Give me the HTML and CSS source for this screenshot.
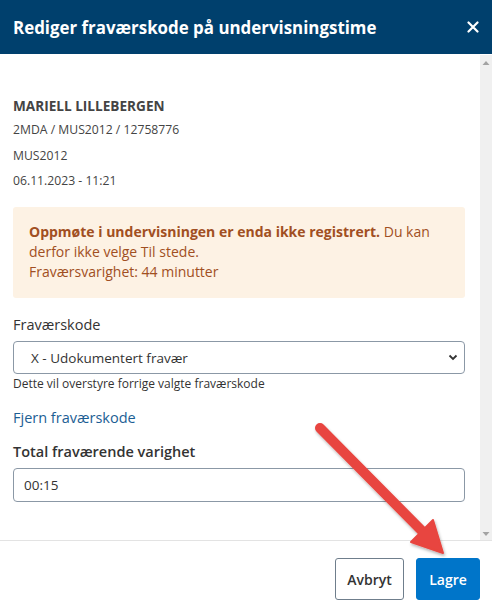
FILE: index.html
```html
<!DOCTYPE html>
<html lang="no">
<head>
<meta charset="utf-8">
<title>Rediger fraværskode</title>
<link rel="stylesheet" href="styles.css">
</head>
<body>
<div class="modal">
  <header class="modal-header">
    <h1 class="modal-title">Rediger fraværskode på undervisningstime</h1>
    <button class="close-btn" aria-label="Lukk">
      <svg width="12" height="12" viewBox="0 0 12 12"><path d="M1.5 1.5 L10.5 10.5 M10.5 1.5 L1.5 10.5" stroke="#fff" stroke-width="2.2" stroke-linecap="round"/></svg>
    </button>
  </header>
  <div class="modal-main">
    <div class="modal-body">
      <div class="student">
        <div class="student-name">MARIELL LILLEBERGEN</div>
        <div class="student-meta m1">2MDA / MUS2012 / 12758776</div>
        <div class="student-meta m2">MUS2012</div>
        <div class="student-meta m3">06.11.2023 - 11:21</div>
      </div>
      <div class="alert">
        <strong>Oppmøte i undervisningen er enda ikke registrert.</strong> Du kan derfor ikke velge Til stede.<br>
        Fraværsvarighet: 44 minutter
      </div>
      <label class="field-label">Fraværskode</label>
      <div class="select">
        <span>X - Udokumentert fravær</span>
        <svg width="10" height="7" viewBox="0 0 10 7"><path d="M1.5 1.5 L5 5 L8.5 1.5" stroke="#333" stroke-width="1.8" fill="none"/></svg>
      </div>
      <div class="help">Dette vil overstyre forrige valgte fraværskode</div>
      <a class="link" href="#">Fjern fraværskode</a>
      <label class="field-label strong">Total fraværende varighet</label>
      <div class="input">00:15</div>
    </div>
    <div class="scrollbar">
      <svg width="12" height="12" viewBox="0 0 12 12"><path d="M2.5 8 L6 4 L9.5 8 Z" fill="#a3a3a3"/></svg>
      <svg width="12" height="12" viewBox="0 0 12 12"><path d="M2.5 4 L6 8 L9.5 4 Z" fill="#a3a3a3"/></svg>
    </div>
  </div>
  <footer class="modal-footer">
    <button class="btn btn-outline">Avbryt</button>
    <button class="btn btn-primary">Lagre</button>
  </footer>
  <svg class="annotation" width="492" height="614" viewBox="0 0 492 614">
    <defs>
      <filter id="sh" x="-20%" y="-20%" width="140%" height="140%">
        <feDropShadow dx="1" dy="2" stdDeviation="1.5" flood-color="#000" flood-opacity="0.3"/>
      </filter>
    </defs>
    <g filter="url(#sh)" fill="#e8453f" stroke="#e8453f">
      <line x1="320" y1="428" x2="424" y2="533" stroke-width="10" stroke-linecap="round"/>
      <path d="M443 553 L411 542 L433 520 Z" stroke-width="2" stroke-linejoin="round"/>
    </g>
  </svg>
</div>
</body>
</html>
```

FILE: styles.css
```css
* { box-sizing: border-box; }
html, body { margin: 0; padding: 0; }
body {
  width: 492px;
  height: 614px;
  overflow: hidden;
  font-family: "Open Sans", "Noto Sans", sans-serif;
  color: #333;
  background: #fff;
}
.modal {
  position: relative;
  display: flex;
  flex-direction: column;
  height: 614px;
}
.modal-header {
  height: 54px;
  background: #00406d;
  display: flex;
  align-items: center;
  justify-content: space-between;
  padding: 0 13px 0 13px;
  flex-shrink: 0;
}
.modal-title {
  margin: 0;
  font-family: "Open Sans", sans-serif;
  font-size: 16.9px;
  font-weight: 700;
  color: #fff;
  letter-spacing: 0;
}
.close-btn {
  background: none;
  border: 0;
  padding: 0;
  display: flex;
  cursor: pointer;
}
.modal-main {
  flex: 1;
  display: flex;
  min-height: 0;
  border-bottom: 1px solid #e3e3e3;
}
.modal-body {
  flex: 1;
  padding: 43px 15px 0 13px;
}
.scrollbar {
  width: 12px;
  background: #f0f0f0;
  display: flex;
  flex-direction: column;
  justify-content: space-between;
  padding: 2px 0 0px;
  margin-top: 1px;
}
.student-name {
  font-size: 13.6px;
  font-weight: 700;
  color: #444;
  line-height: 18px;
}
.student-meta {
  font-size: 12.2px;
  color: #444;
  line-height: 16px;
}
.m1 { margin-top: 7px; }
.m2 { margin-top: 10px; }
.m3 { margin-top: 9px; }
.alert {
  margin-top: 18px;
  background: #fdf2e4;
  border-radius: 3px;
  padding: 15px 16px 16px 16px;
  color: #a14f22;
  font-size: 14px;
  line-height: 20px;
}
.alert strong { font-weight: 700; }
.field-label {
  display: block;
  margin-top: 17px;
  font-size: 14.5px;
  color: #333;
  line-height: 20px;
}
.field-label.strong { font-weight: 600; margin-top: 14px; }
.select {
  margin-top: 6px;
  height: 33px;
  border: 1px solid #8b98a6;
  border-radius: 4px;
  display: flex;
  align-items: center;
  justify-content: space-between;
  padding: 0 6px 0 17px;
  font-size: 13.5px;
  color: #333;
}
.help {
  margin-top: 2px;
  font-size: 12px;
  color: #333;
  line-height: 16px;
}
.link {
  display: block;
  margin-top: 16px;
  font-size: 14.5px;
  color: #1c5e94;
  text-decoration: none;
  line-height: 20px;
}
.input {
  margin-top: 6px;
  height: 34px;
  border: 1px solid #8b98a6;
  border-radius: 4px;
  display: flex;
  align-items: center;
  padding: 0 10px;
  font-size: 13.5px;
  color: #333;
}
.modal-footer {
  height: 73px;
  flex-shrink: 0;
  display: flex;
  justify-content: flex-end;
  align-items: flex-start;
  gap: 12px;
  padding: 17px 12px 0 0;
}
.btn {
  height: 42px;
  font-family: "Open Sans", sans-serif;
  font-size: 14px;
  font-weight: 600;
  border-radius: 3px;
  cursor: pointer;
}
.btn-outline {
  width: 69px;
  background: #fff;
  border: 1px solid #6f7e8c;
  color: #333;
}
.btn-primary {
  width: 64px;
  background: #0075c9;
  border: 1px solid #0075c9;
  color: #fff;
}
.annotation {
  position: absolute;
  left: 0;
  top: 0;
  pointer-events: none;
}
```
